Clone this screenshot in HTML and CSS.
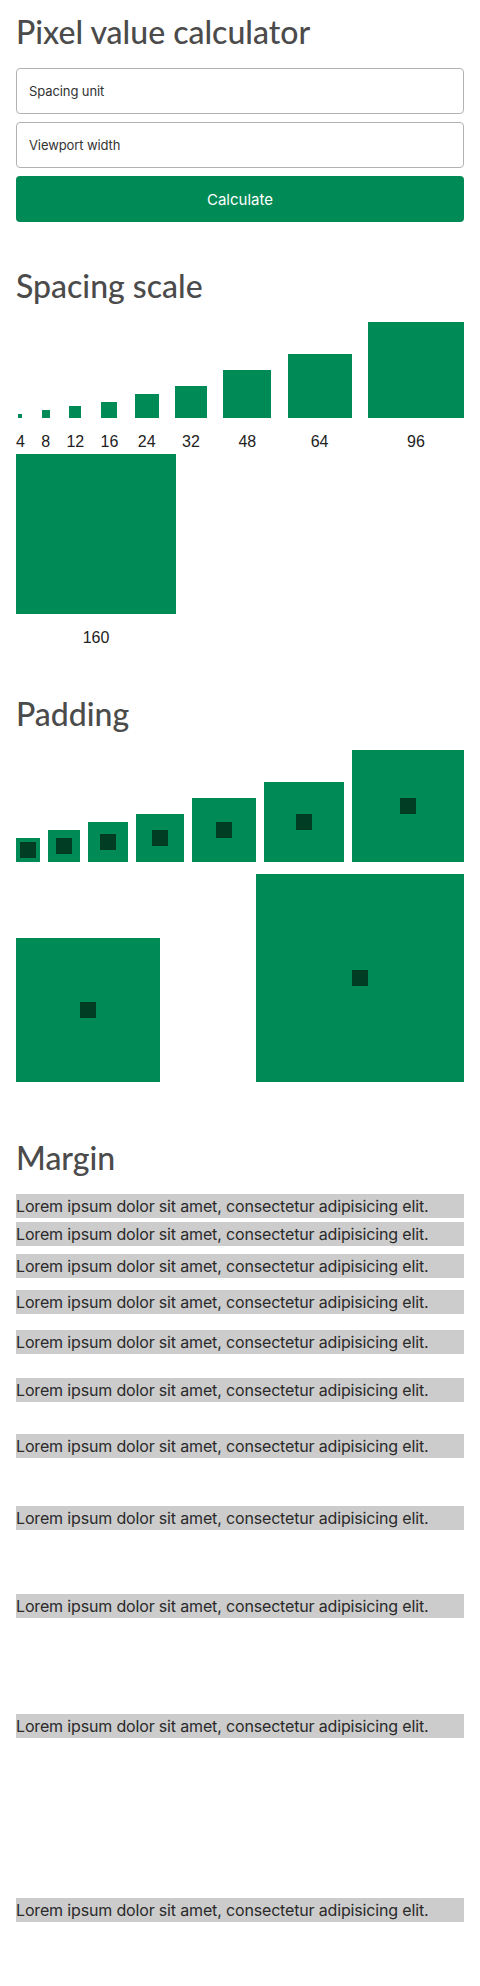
FILE: index.html
```html
<!DOCTYPE html>
<html lang="en">
<head>
<meta charset="utf-8">
<title>Pixel value calculator</title>
<link rel="stylesheet" href="styles.css">
</head>
<body>
<main class="page">
  <h1 class="heading">Pixel value calculator</h1>
  <form class="calc">
    <input class="field" type="text" placeholder="Spacing unit">
    <input class="field" type="text" placeholder="Viewport width">
    <button class="btn" type="button">Calculate</button>
  </form>

  <section class="section">
    <h2 class="heading">Spacing scale</h2>
    <div class="scale">
      <div class="scale-item"><div class="swatch" style="--s:4px"></div><span class="scale-label">4</span></div>
      <div class="scale-item"><div class="swatch" style="--s:8px"></div><span class="scale-label">8</span></div>
      <div class="scale-item"><div class="swatch" style="--s:12px"></div><span class="scale-label">12</span></div>
      <div class="scale-item"><div class="swatch" style="--s:16px"></div><span class="scale-label">16</span></div>
      <div class="scale-item"><div class="swatch" style="--s:24px"></div><span class="scale-label">24</span></div>
      <div class="scale-item"><div class="swatch" style="--s:32px"></div><span class="scale-label">32</span></div>
      <div class="scale-item"><div class="swatch" style="--s:48px"></div><span class="scale-label">48</span></div>
      <div class="scale-item"><div class="swatch" style="--s:64px"></div><span class="scale-label">64</span></div>
      <div class="scale-item"><div class="swatch" style="--s:96px"></div><span class="scale-label">96</span></div>
      <div class="scale-item"><div class="swatch" style="--s:160px"></div><span class="scale-label">160</span></div>
    </div>
  </section>

  <section class="section">
    <h2 class="heading">Padding</h2>
    <div class="pads">
      <div class="pad" style="--p:4px"><div class="pad-inner"></div></div>
      <div class="pad" style="--p:8px"><div class="pad-inner"></div></div>
      <div class="pad" style="--p:12px"><div class="pad-inner"></div></div>
      <div class="pad" style="--p:16px"><div class="pad-inner"></div></div>
      <div class="pad" style="--p:24px"><div class="pad-inner"></div></div>
      <div class="pad" style="--p:32px"><div class="pad-inner"></div></div>
      <div class="pad" style="--p:48px"><div class="pad-inner"></div></div>
      <div class="pad" style="--p:64px"><div class="pad-inner"></div></div>
      <div class="pad" style="--p:96px"><div class="pad-inner"></div></div>
    </div>
  </section>

  <section class="section">
    <h2 class="heading">Margin</h2>
    <div class="margins">
      <p class="lorem" style="--m:4px">Lorem ipsum dolor sit amet, consectetur adipisicing elit.</p>
      <p class="lorem" style="--m:4px">Lorem ipsum dolor sit amet, consectetur adipisicing elit.</p>
      <p class="lorem" style="--m:8px">Lorem ipsum dolor sit amet, consectetur adipisicing elit.</p>
      <p class="lorem" style="--m:12px">Lorem ipsum dolor sit amet, consectetur adipisicing elit.</p>
      <p class="lorem" style="--m:16px">Lorem ipsum dolor sit amet, consectetur adipisicing elit.</p>
      <p class="lorem" style="--m:24px">Lorem ipsum dolor sit amet, consectetur adipisicing elit.</p>
      <p class="lorem" style="--m:32px">Lorem ipsum dolor sit amet, consectetur adipisicing elit.</p>
      <p class="lorem" style="--m:48px">Lorem ipsum dolor sit amet, consectetur adipisicing elit.</p>
      <p class="lorem" style="--m:64px">Lorem ipsum dolor sit amet, consectetur adipisicing elit.</p>
      <p class="lorem" style="--m:96px">Lorem ipsum dolor sit amet, consectetur adipisicing elit.</p>
      <p class="lorem" style="--m:160px">Lorem ipsum dolor sit amet, consectetur adipisicing elit.</p>
    </div>
  </section>
</main>
</body>
</html>
```

FILE: styles.css
```css
* { box-sizing: border-box; }

html, body {
  margin: 0;
  padding: 0;
  background: #ffffff;
}

body {
  font-family: Inter, "Liberation Sans", Arial, sans-serif;
  font-size: 16px;
  line-height: 24px;
  color: #222222;
}

.page {
  padding: 12px 16px 64px;
}

.heading {
  margin: 0 0 16px;
  font-family: Lato, "Open Sans", sans-serif;
  font-size: 32px;
  font-weight: 500;
  line-height: 40px;
  color: #4b4b4b;
}

.calc {
  display: flex;
  flex-direction: column;
  gap: 8px;
}

.field {
  display: block;
  width: 100%;
  height: 46px;
  padding: 0 12px;
  border: 1px solid #b3b3b3;
  border-radius: 4px;
  font-family: Inter, "Liberation Sans", sans-serif;
  font-size: 13px;
  letter-spacing: -0.1px;
  color: #333333;
  background: #ffffff;
}

.field::placeholder {
  color: #333333;
  opacity: 1;
}

.btn {
  display: block;
  width: 100%;
  height: 46px;
  border: 0;
  border-radius: 4px;
  background: #008a55;
  color: #ffffff;
  font-family: Inter, "Liberation Sans", sans-serif;
  font-size: 15px;
}

.section {
  margin-top: 44px;
}

.scale {
  display: flex;
  flex-wrap: wrap;
  justify-content: space-between;
  align-items: flex-end;
  column-gap: 16px;
}

.scale-item {
  display: flex;
  flex-direction: column;
  align-items: center;
}

.swatch {
  width: var(--s);
  height: var(--s);
  background: #008a55;
}

.scale-label {
  margin-top: 12px;
  font-family: "Liberation Sans", Arial, sans-serif;
  font-size: 16px;
  line-height: 24px;
  color: #222222;
}

.pads {
  display: flex;
  flex-wrap: wrap;
  justify-content: space-between;
  align-items: flex-end;
  gap: 12px 8px;
  padding-bottom: 12px;
}

.pad {
  padding: var(--p);
  background: #008a55;
}

.pad-inner {
  width: 16px;
  height: 16px;
  background: #003d24;
}

.margins {
  display: block;
}

.lorem {
  margin: var(--m) 0 0;
  background: #cccccc;
  line-height: 24px;
  letter-spacing: -0.16px;
  white-space: nowrap;
  color: #2a2a2a;
}
```
